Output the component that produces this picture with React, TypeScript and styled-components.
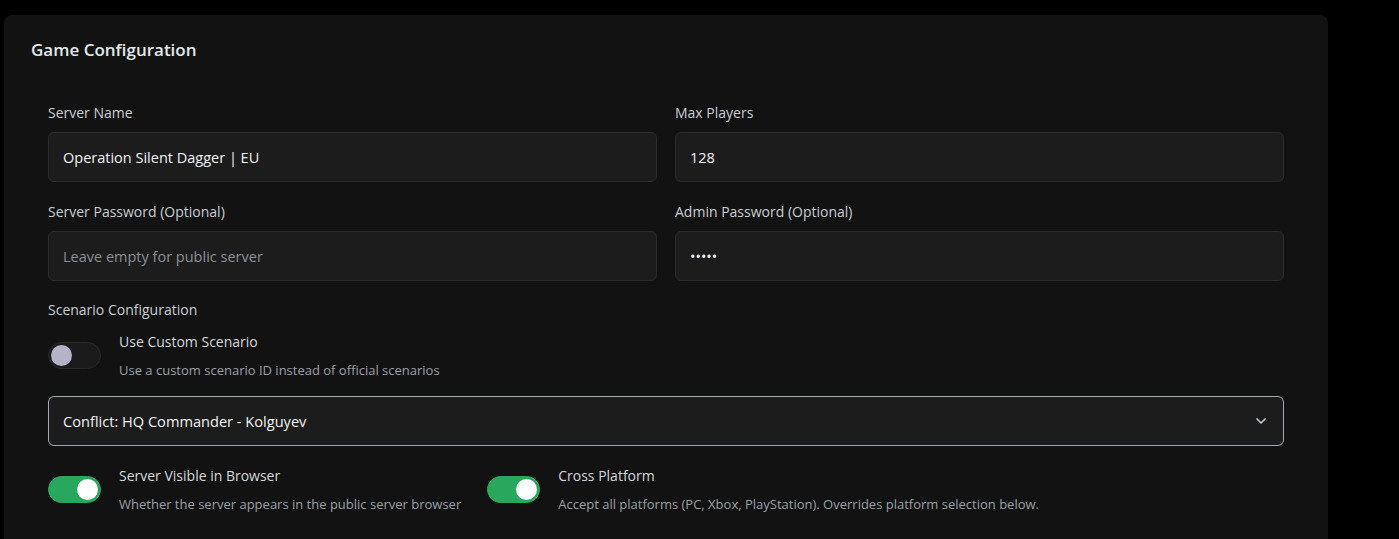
import styled, { createGlobalStyle } from 'styled-components'
import { ChevronDown } from 'lucide-react'

const GlobalStyle = createGlobalStyle`
  body {
    margin: 0;
    background: #000;
    font-family: 'Open Sans', 'Noto Sans', sans-serif;
  }
`

const Page = styled.div`
  padding: 15px 0 0 4px;
  height: 524px;
  overflow: hidden;
`

const Card = styled.section`
  width: 1324px;
  min-height: 560px;
  background: #121212;
  border-radius: 8px;
`

const Header = styled.h2`
  margin: 0;
  padding: 23px 27px 0;
  font-size: 17px;
  line-height: 24px;
  font-weight: 600;
  color: #e3e8ec;
`

const Body = styled.div`
  padding: 41px 44px 0;
  display: flex;
  flex-direction: column;
`

const FieldGrid = styled.div`
  display: grid;
  grid-template-columns: 1fr 1fr;
  column-gap: 18px;
  row-gap: 20px;
`

const Field = styled.label`
  display: flex;
  flex-direction: column;
  gap: 9px;
`

const Label = styled.span`
  font-size: 14px;
  line-height: 20px;
  color: #c9ced2;
`

const Input = styled.div<{ $placeholder?: boolean }>`
  height: 50px;
  box-sizing: border-box;
  display: flex;
  align-items: center;
  padding: 0 14px;
  background: #1c1c1c;
  border: 1px solid #2b2b2b;
  border-radius: 6px;
  font-size: 14.5px;
  color: ${(p) => (p.$placeholder ? '#8b9096' : '#f0f2f4')};
`

const Section = styled.div`
  margin-top: 19px;
  display: flex;
  flex-direction: column;
  gap: 12px;
`

const ToggleRow = styled.div`
  display: flex;
  align-items: center;
  gap: 18px;
`

const Track = styled.span<{ $on?: boolean }>`
  position: relative;
  flex: none;
  width: 53px;
  height: 27px;
  box-sizing: border-box;
  border-radius: 14px;
  background: ${(p) => (p.$on ? '#27a85c' : '#1b1b1b')};
  border: 1px solid ${(p) => (p.$on ? '#27a85c' : '#2a2a2a')};
`

const Knob = styled.span<{ $on?: boolean }>`
  position: absolute;
  top: 2px;
  left: ${(p) => (p.$on ? '28px' : '2px')};
  width: 21px;
  height: 21px;
  border-radius: 50%;
  background: ${(p) => (p.$on ? '#ffffff' : '#b4b3c7')};
`

const ToggleText = styled.div`
  display: flex;
  flex-direction: column;
  gap: 9px;
`

const ToggleTitle = styled.span`
  font-size: 14px;
  line-height: 20px;
  color: #d4d8dc;
`

const ToggleDesc = styled.span`
  font-size: 13px;
  line-height: 18px;
  color: #9aa0a6;
`

const Select = styled.div`
  margin-top: 17px;
  height: 50px;
  box-sizing: border-box;
  display: flex;
  align-items: center;
  justify-content: space-between;
  padding: 0 14px;
  background: #1c1c1c;
  border: 1px solid #a3a8b0;
  border-radius: 6px;
  font-size: 14.6px;
  font-weight: 500;
  color: #f0f2f4;
  svg {
    color: #bccad4;
  }
`

const ToggleGroup = styled.div`
  margin-top: 20px;
  display: flex;
  gap: 26px;
`

const Toggle = ({ on, title, desc }: { on?: boolean; title: string; desc: string }) => (
  <ToggleRow>
    <Track $on={on}>
      <Knob $on={on} />
    </Track>
    <ToggleText>
      <ToggleTitle>{title}</ToggleTitle>
      <ToggleDesc>{desc}</ToggleDesc>
    </ToggleText>
  </ToggleRow>
)

const App = () => (
  <Page>
    <GlobalStyle />
    <Card>
      <Header>Game Configuration</Header>
      <Body>
        <FieldGrid>
          <Field>
            <Label>Server Name</Label>
            <Input>Operation Silent Dagger | EU</Input>
          </Field>
          <Field>
            <Label>Max Players</Label>
            <Input>128</Input>
          </Field>
          <Field>
            <Label>Server Password (Optional)</Label>
            <Input $placeholder>Leave empty for public server</Input>
          </Field>
          <Field>
            <Label>Admin Password (Optional)</Label>
            <Input>•••••</Input>
          </Field>
        </FieldGrid>

        <Section>
          <Label>Scenario Configuration</Label>
          <Toggle title="Use Custom Scenario" desc="Use a custom scenario ID instead of official scenarios" />
        </Section>

        <Select>
          <span>Conflict: HQ Commander - Kolguyev</span>
          <ChevronDown size={16} strokeWidth={2.5} />
        </Select>

        <ToggleGroup>
          <Toggle on title="Server Visible in Browser" desc="Whether the server appears in the public server browser" />
          <Toggle
            on
            title="Cross Platform"
            desc="Accept all platforms (PC, Xbox, PlayStation). Overrides platform selection below."
          />
        </ToggleGroup>
      </Body>
    </Card>
  </Page>
)

export default App
